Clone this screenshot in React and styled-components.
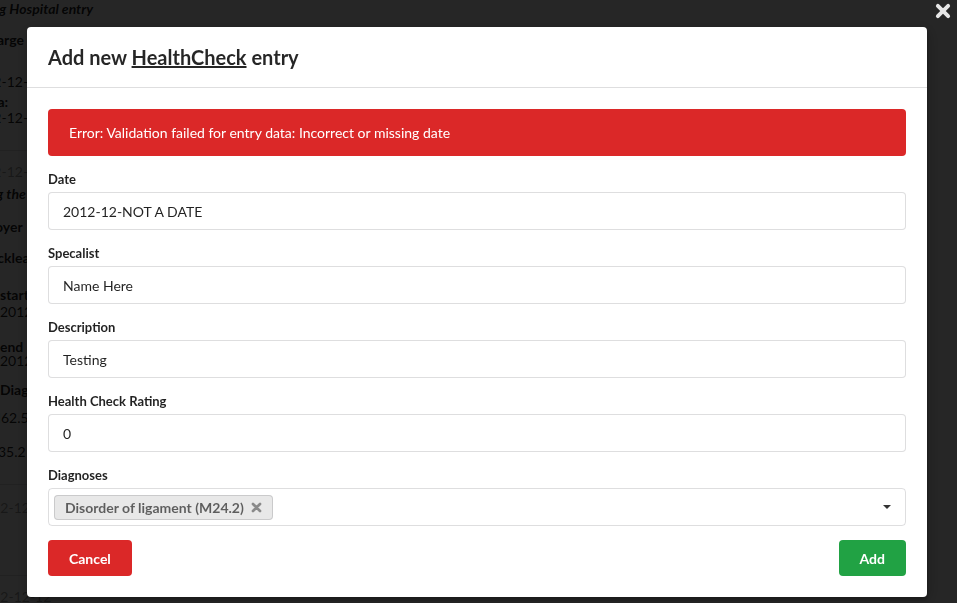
import React from 'react';
import styled, { createGlobalStyle } from 'styled-components';

const GlobalStyle = createGlobalStyle`
  html, body {
    margin: 0;
    padding: 0;
    background: #ffffff;
    font-family: Lato, "Helvetica Neue", Arial, sans-serif;
    font-size: 14px;
    color: rgba(0, 0, 0, 0.87);
    overflow: hidden;
  }
  * { box-sizing: border-box; }
`;

const Page = styled.div`
  width: 957px;
  height: 603px;
  overflow: hidden;
`;

const PageColumn = styled.div`
  margin-left: -60px;
  width: 400px;
`;

const BgLine = styled.div`
  line-height: 18px;
  margin-top: ${p => p.mt || 0}px;
  padding-left: ${p => p.indent || 0}px;
  font-weight: ${p => (p.bold ? 700 : 400)};
  font-style: ${p => (p.italic ? 'italic' : 'normal')};
  color: ${p => (p.muted ? 'rgba(0,0,0,0.4)' : 'rgba(0,0,0,0.87)')};
  white-space: nowrap;
`;

const BgRule = styled.hr`
  margin: ${p => p.mt || 0}px 0 0 0;
  border: none;
  border-top: 1px solid rgba(34, 36, 38, 0.15);
  height: 0;
`;

const Dimmer = styled.div`
  position: fixed;
  inset: 0;
  background: rgba(0, 0, 0, 0.85);
  padding: 27px 0 0 27px;
`;

const CloseButton = styled.button`
  position: absolute;
  top: 3px;
  right: 6px;
  padding: 0;
  border: none;
  background: transparent;
  display: flex;
  cursor: pointer;
`;

const Modal = styled.div`
  width: 900px;
  background: #ffffff;
  border-radius: 4px;
  box-shadow: 1px 3px 3px 0 rgba(0, 0, 0, 0.2), 1px 3px 15px 2px rgba(0, 0, 0, 0.2);
`;

const Header = styled.div`
  padding: 17.5px 21px;
  border-bottom: 1px solid rgba(34, 36, 38, 0.15);
  font-size: 20px;
  font-weight: 700;
  line-height: 25px;
  color: rgba(0, 0, 0, 0.85);
`;

const Underlined = styled.span`
  text-decoration: underline;
`;

const Content = styled.div`
  padding: 21px;
`;

const Message = styled.div`
  background: #db2828;
  color: #ffffff;
  border-radius: 4px;
  padding: 14px 21px;
  line-height: 19px;
  margin-bottom: 14px;
`;

const Form = styled.form`
  display: flex;
  flex-direction: column;
`;

const Field = styled.div`
  margin-bottom: 14px;
`;

const Label = styled.label`
  display: block;
  font-size: 13px;
  font-weight: 700;
  line-height: 18px;
  margin-bottom: 4px;
  color: rgba(0, 0, 0, 0.87);
`;

const Input = styled.input`
  display: block;
  width: 100%;
  height: 38px;
  padding: 9.5px 14px;
  font-family: inherit;
  font-size: 14px;
  line-height: 17px;
  color: rgba(0, 0, 0, 0.87);
  border: 1px solid rgba(34, 36, 38, 0.15);
  border-radius: 4px;
  outline: none;
`;

const Dropdown = styled.div`
  display: flex;
  align-items: center;
  height: 38px;
  padding: 0 14px 0 5px;
  border: 1px solid rgba(34, 36, 38, 0.15);
  border-radius: 4px;
`;

const Chip = styled.span`
  display: inline-flex;
  align-items: center;
  height: 25px;
  padding: 0 11px;
  background: #e8e8e8;
  border-radius: 4px;
  box-shadow: inset 0 0 0 1px rgba(34, 36, 38, 0.15);
  color: rgba(0, 0, 0, 0.6);
  font-weight: 700;
  font-size: 14px;
`;

const ChipDelete = styled.span`
  display: inline-flex;
  margin-left: 7px;
  opacity: 0.4;
`;

const Caret = styled.span`
  margin-left: auto;
  width: 0;
  height: 0;
  border-left: 4px solid transparent;
  border-right: 4px solid transparent;
  border-top: 4.5px solid rgba(0, 0, 0, 0.8);
`;

const Actions = styled.div`
  display: flex;
  justify-content: space-between;
`;

const Button = styled.button`
  height: 36px;
  padding: 0 21px;
  border: none;
  border-radius: 4px;
  font-family: inherit;
  font-size: 14px;
  font-weight: 700;
  color: #ffffff;
  background: ${p => (p.color === 'green' ? '#21a244' : '#db2828')};
  cursor: pointer;
`;

function Cross({ size, color }) {
  return (
    <svg width={size} height={size} viewBox="0 0 14 14">
      <path d="M2.5 2.5 L11.5 11.5 M11.5 2.5 L2.5 11.5" stroke={color} strokeWidth="3.4" strokeLinecap="round" />
    </svg>
  );
}

function Background() {
  return (
    <Page>
      <PageColumn>
        <BgLine bold italic indent={16}>Ongoing Hospital entry</BgLine>
        <BgLine bold indent={22} mt={13}>Discharge</BgLine>
        <BgLine indent={29} mt={24}>2012-12-19</BgLine>
        <BgLine bold indent={18} mt={2}>Criteria:</BgLine>
        <BgLine indent={29} mt={-2}>2012-12-19</BgLine>
        <BgRule mt={23} />
        <BgLine muted indent={29} mt={12}>2012-12-19</BgLine>
        <BgLine bold italic indent={18} mt={4}>Healing the wound</BgLine>
        <BgLine bold indent={24} mt={15}>Employer</BgLine>
        <BgLine bold indent={46} mt={13}>Sickleave</BgLine>
        <BgLine bold indent={60} mt={19}>start date</BgLine>
        <BgLine indent={60} mt={-1}>2012-12-19</BgLine>
        <BgLine bold indent={60} mt={17}>end date</BgLine>
        <BgLine indent={60} mt={-4}>2012-12-20</BgLine>
        <BgLine bold indent={60} mt={11}>Diagnoses</BgLine>
        <BgLine indent={48} mt={10}>M62.5</BgLine>
        <BgLine indent={52} mt={16}>J35.2</BgLine>
        <BgRule mt={23} />
        <BgLine muted indent={36} mt={14}>2012-12-12</BgLine>
        <BgRule mt={58} />
        <BgLine muted indent={36} mt={12}>2012-12-12</BgLine>
      </PageColumn>
    </Page>
  );
}

export default function App() {
  return (
    <>
      <GlobalStyle />
      <Background />
      <Dimmer>
        <CloseButton aria-label="close">
          <Cross size={16} color="#e6e6e6" />
        </CloseButton>
        <Modal>
          <Header>
            Add new <Underlined>HealthCheck</Underlined> entry
          </Header>
          <Content>
            <Message>Error: Validation failed for entry data: Incorrect or missing date</Message>
            <Form onSubmit={e => e.preventDefault()}>
              <Field>
                <Label>Date</Label>
                <Input defaultValue="2012-12-NOT A DATE" />
              </Field>
              <Field>
                <Label>Specalist</Label>
                <Input defaultValue="Name Here" />
              </Field>
              <Field>
                <Label>Description</Label>
                <Input defaultValue="Testing" />
              </Field>
              <Field>
                <Label>Health Check Rating</Label>
                <Input defaultValue="0" />
              </Field>
              <Field>
                <Label>Diagnoses</Label>
                <Dropdown>
                  <Chip>
                    Disorder of ligament (M24.2)
                    <ChipDelete>
                      <Cross size={11} color="#000000" />
                    </ChipDelete>
                  </Chip>
                  <Caret />
                </Dropdown>
              </Field>
              <Actions>
                <Button type="button" color="red">Cancel</Button>
                <Button type="submit" color="green">Add</Button>
              </Actions>
            </Form>
          </Content>
        </Modal>
      </Dimmer>
    </>
  );
}
